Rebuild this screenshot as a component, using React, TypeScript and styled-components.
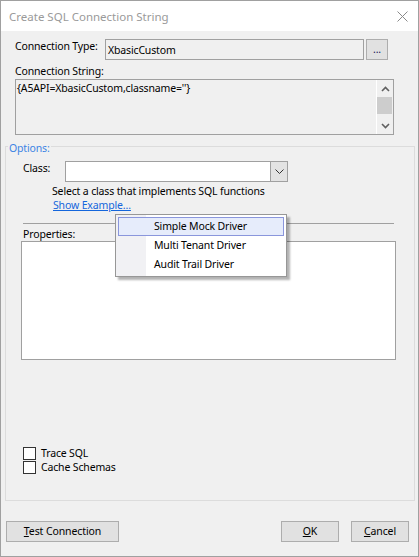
import React from "react";
import styled, { createGlobalStyle } from "styled-components";

const Global = createGlobalStyle`
  html, body { margin: 0; padding: 0; background: #ffffff; }
  body {
    font-family: "Noto Sans", "Segoe UI", sans-serif;
    font-size: 10.5px;
    letter-spacing: -0.15px;
    color: #000;
  }
  * { box-sizing: border-box; }
`;

const Window = styled.div`
  position: relative;
  width: 419px;
  height: 557px;
  border: 1px solid #a0a0a0;
  background: #f0f0f0;
  display: flex;
  flex-direction: column;
`;

const TitleBar = styled.div`
  height: 30px;
  flex-shrink: 0;
  background: #ffffff;
  display: flex;
  align-items: center;
  justify-content: space-between;
  padding: 0 10px 0 8px;
`;

const Title = styled.span`
  font-size: 11.5px;
  letter-spacing: 0;
  color: #9a9a9a;
`;

const TopSection = styled.div`
  padding: 8px 24px 0 14px;
  display: flex;
  flex-direction: column;
`;

const FieldRow = styled.div`
  display: flex;
  height: 21px;
`;

const FieldLabel = styled.div<{ $w: number }>`
  width: ${(p) => p.$w}px;
  flex-shrink: 0;
  line-height: 14px;
`;

const ReadOnlyInput = styled.div`
  width: 259px;
  height: 21px;
  border: 1px solid #a0a0a0;
  background: #f0f0f0;
  line-height: 20px;
  padding-left: 2px;
`;

const Button = styled.button<{ $w: number }>`
  width: ${(p) => p.$w}px;
  height: 21px;
  padding: 0;
  border: 1px solid #adadad;
  background: #e1e1e1;
  font-family: inherit;
  font-size: 10.5px;
  letter-spacing: -0.1px;
  line-height: 17px;
  color: #000;
  text-align: center;
`;

const EllipsisButton = styled(Button)`
  margin-left: 2px;
  color: #1a1a5a;
`;

const StackLabel = styled.div`
  margin-top: 4px;
  line-height: 14px;
`;

const TextArea = styled.div`
  margin-top: 1px;
  height: 56px;
  border: 1px solid #a0a0a0;
  background: #f0f0f0;
  display: flex;
`;

const TextAreaText = styled.div`
  flex: 1;
  padding: 1px 0 0 1px;
  line-height: 14px;
`;

const ScrollBar = styled.div`
  width: 17px;
  border-left: 1px solid #ffffff;
  display: flex;
  flex-direction: column;
`;

const ScrollArrow = styled.div`
  height: 17px;
  display: flex;
  align-items: center;
  justify-content: center;
`;

const ScrollThumb = styled.div`
  height: 17px;
  margin-right: 1px;
  background: #cdcdcd;
`;

const ScrollTrack = styled.div`
  flex: 1;
`;

const Group = styled.fieldset`
  flex: 1;
  margin: 2px 3px 0 4px;
  padding: 0;
  min-width: 0;
  border: 1px solid #dcdcdc;
`;

const GroupLegend = styled.legend`
  margin-left: 2px;
  padding: 4px 1px 0 1px;
  line-height: 14px;
  color: #3c84e4;
`;

const GroupContent = styled.div`
  padding: 6px 20px 0 17px;
  display: flex;
  flex-direction: column;
`;

const ClassRow = styled.div`
  display: flex;
  height: 21px;
`;

const Combo = styled.div`
  width: 223px;
  height: 21px;
  border: 1px solid #a0a0a0;
  background: #ffffff;
  display: flex;
  justify-content: flex-end;
`;

const ComboButton = styled.div`
  width: 17px;
  border-left: 1px solid #a0a0a0;
  background: #e3e3e3;
  display: flex;
  align-items: center;
  justify-content: center;
`;

const Hint = styled.div`
  margin: 2px 0 0 29px;
  line-height: 14px;
`;

const LinkText = styled.a`
  align-self: flex-start;
  margin-left: 30px;
  line-height: 14px;
  color: #1466dc;
  text-decoration: underline;
  cursor: pointer;
`;

const Separator = styled.div`
  margin-top: 11px;
  height: 1px;
  background: #a0a0a0;
`;

const PropsLabel = styled.div`
  margin-top: 3px;
  line-height: 14px;
`;

const PropsBox = styled.div`
  margin: 0 -2px;
  height: 119px;
  border: 1px solid #a0a0a0;
  background: #ffffff;
`;

const Checks = styled.div`
  margin-top: 87px;
  display: flex;
  flex-direction: column;
`;

const CheckRow = styled.label`
  display: flex;
  height: 14px;
  gap: 5px;
`;

const CheckBox = styled.span`
  width: 13px;
  height: 13px;
  border: 1px solid #333333;
  background: #ffffff;
`;

const CheckText = styled.span`
  line-height: 13px;
`;

const Footer = styled.div`
  flex-shrink: 0;
  display: flex;
  align-items: flex-start;
  padding: 20px 9px 14px 5px;
`;

const Spacer = styled.div`
  flex: 1;
`;

const Gap = styled.div<{ $w: number }>`
  width: ${(p) => p.$w}px;
`;

const Menu = styled.div`
  position: absolute;
  left: 114px;
  top: 213px;
  width: 172px;
  height: 63px;
  border: 1px solid #979797;
  padding: 2px;
  background: linear-gradient(to right, #f1f1f4 30px, #ffffff 30px);
  box-shadow: 3px 3px 2px rgba(0, 0, 0, 0.3);
`;

const MenuItem = styled.div<{ $active?: boolean }>`
  height: 19px;
  line-height: 17px;
  padding-left: 35px;
  border: 1px solid ${(p) => (p.$active ? "#8a96dc" : "transparent")};
  background: ${(p) => (p.$active ? "#e6ecfb" : "transparent")};
`;

const Chevron = ({ dir }: { dir: "up" | "down" }) => (
  <svg width="9" height="6" viewBox="0 0 9 6">
    <polyline
      points={dir === "up" ? "1,5 4.5,1.5 8,5" : "1,1 4.5,4.5 8,1"}
      fill="none"
      stroke="#606060"
      strokeWidth="1.6"
    />
  </svg>
);

const ComboChevron = () => (
  <svg width="9" height="5" viewBox="0 0 9 5">
    <polyline points="0.5,0.5 4.5,4.5 8.5,0.5" fill="none" stroke="#333" strokeWidth="1" />
  </svg>
);

const CloseIcon = () => (
  <svg width="11" height="11" viewBox="0 0 11 11">
    <path d="M0.5 0.5 L10.5 10.5 M10.5 0.5 L0.5 10.5" stroke="#8a8a8a" strokeWidth="1" fill="none" />
  </svg>
);

export default function App() {
  return (
    <>
      <Global />
      <Window>
        <TitleBar>
          <Title>Create SQL Connection String</Title>
          <CloseIcon />
        </TitleBar>
        <TopSection>
          <FieldRow>
            <FieldLabel $w={90}>Connection Type:</FieldLabel>
            <ReadOnlyInput>XbasicCustom</ReadOnlyInput>
            <EllipsisButton $w={22}>...</EllipsisButton>
          </FieldRow>
          <StackLabel>Connection String:</StackLabel>
          <TextArea>
            <TextAreaText>{"{A5API=XbasicCustom,classname=''}"}</TextAreaText>
            <ScrollBar>
              <ScrollArrow>
                <Chevron dir="up" />
              </ScrollArrow>
              <ScrollThumb />
              <ScrollTrack />
              <ScrollArrow>
                <Chevron dir="down" />
              </ScrollArrow>
            </ScrollBar>
          </TextArea>
        </TopSection>
        <Group>
          <GroupLegend>Options:</GroupLegend>
          <GroupContent>
            <ClassRow>
              <FieldLabel $w={42}>Class:</FieldLabel>
              <Combo>
                <ComboButton>
                  <ComboChevron />
                </ComboButton>
              </Combo>
            </ClassRow>
            <Hint>Select a class that implements SQL functions</Hint>
            <LinkText>Show Example…</LinkText>
            <Separator />
            <PropsLabel>Properties:</PropsLabel>
            <PropsBox />
            <Checks>
              <CheckRow>
                <CheckBox />
                <CheckText>Trace SQL</CheckText>
              </CheckRow>
              <CheckRow>
                <CheckBox />
                <CheckText>Cache Schemas</CheckText>
              </CheckRow>
            </Checks>
          </GroupContent>
        </Group>
        <Footer>
          <Button $w={113}>
            <u>T</u>est Connection
          </Button>
          <Spacer />
          <Button $w={58}>
            <u>O</u>K
          </Button>
          <Gap $w={12} />
          <Button $w={58}>
            <u>C</u>ancel
          </Button>
        </Footer>
        <Menu>
          <MenuItem $active>Simple Mock Driver</MenuItem>
          <MenuItem>Multi Tenant Driver</MenuItem>
          <MenuItem>Audit Trail Driver</MenuItem>
        </Menu>
      </Window>
    </>
  );
}
